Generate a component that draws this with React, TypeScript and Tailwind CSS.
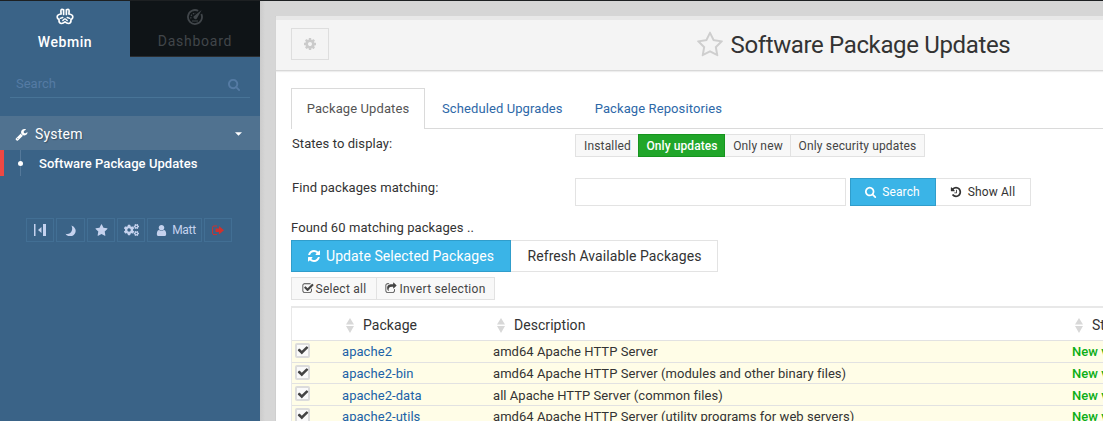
import React from 'react';
import { FaCogs } from 'react-icons/fa';

const paths = {
  search: 'M1152 832q0-185-131.5-316.5t-316.5-131.5-316.5 131.5-131.5 316.5 131.5 316.5 316.5 131.5 316.5-131.5 131.5-316.5zm512 832q0 52-38 90t-90 38q-54 0-90-38l-343-342q-179 124-399 124-143 0-273.5-55.5t-225-150-150-225-55.5-273.5 55.5-273.5 150-225 225-150 273.5-55.5 273.5 55.5 225 150 150 225 55.5 273.5q0 220-124 399l343 343q37 37 37 90z',
  refresh: 'M1639 1056q0 5-1 7-64 268-268 434.5t-478 166.5q-146 0-282.5-55t-243.5-157l-129 129q-19 19-45 19t-45-19-19-45v-448q0-26 19-45t45-19h448q26 0 45 19t19 45-19 45l-137 137q71 66 161 102t187 36q134 0 250-65t186-179q11-17 53-117 8-23 30-23h192q13 0 22.5 9.5t9.5 22.5zm25-800v448q0 26-19 45t-45 19h-448q-26 0-45-19t-19-45 19-45l138-138q-148-137-349-137-134 0-250 65t-186 179q-11 17-53 117-8 23-30 23h-199q-13 0-22.5-9.5t-9.5-22.5v-7q65-268 270-434.5t480-166.5q146 0 284 55.5t245 156.5l130-129q19-19 45-19t45 19 19 45z',
  history: 'M1664 896q0 156-61 298t-164 245-245 164-298 61q-172 0-327-72.5t-264-204.5q-7-10-6.5-22.5t8.5-20.5l137-138q10-9 25-9 16 2 23 12 73 95 179 147t225 52q104 0 198.5-40.5t163.5-109.5 109.5-163.5 40.5-198.5-40.5-198.5-109.5-163.5-163.5-109.5-198.5-40.5q-98 0-188 35.5t-160 101.5l137 138q31 30 14 69-17 40-59 40h-448q-26 0-45-19t-19-45v-448q0-42 40-59 39-17 69 14l130 129q107-101 244.5-156.5t284.5-55.5q156 0 298 61t245 164 164 245 61 298zm-640-288v448q0 14-9 23t-23 9h-320q-14 0-23-9t-9-23v-64q0-14 9-23t23-9h224v-352q0-14 9-23t23-9h64q14 0 23 9t9 23z',
  star: 'M1728 647q0 22-26 48l-363 354 86 500q1 7 1 20 0 21-10.5 35.5t-30.5 14.5q-19 0-40-12l-449-236-449 236q-22 12-40 12-21 0-31.5-14.5t-10.5-35.5q0-6 2-20l86-500-364-354q-25-27-25-48 0-37 56-46l502-73 225-455q19-41 49-41t49 41l225 455 502 73q56 9 56 46z',
  starOutline: 'M1201 1004l306-297-422-62-189-382-189 382-422 62 306 297-73 421 378-199 377 199zm527-357q0 22-26 48l-363 354 86 500q1 7 1 20 0 50-41 50-19 0-40-12l-449-236-449 236q-22 12-40 12-21 0-31.5-14.5t-10.5-35.5q0-6 2-20l86-500-364-354q-25-27-25-48 0-37 56-46l502-73 225-455q19-41 49-41t49 41l225 455 502 73q56 9 56 46z',
  cog: 'M1152 896q0-106-75-181t-181-75-181 75-75 181 75 181 181 75 181-75 75-181zm512-109v222q0 12-8 23t-20 13l-185 28q-19 54-39 91 35 50 107 138 10 12 10 25t-9 23q-27 37-99 108t-94 71q-12 0-26-9l-138-108q-44 23-91 38-16 136-29 186-7 28-36 28h-222q-14 0-24.5-8.5t-11.5-21.5l-28-184q-49-16-90-37l-141 107q-10 9-25 9-14 0-25-11-126-114-165-168-7-10-7-23 0-12 8-23 15-21 51-66.5t54-70.5q-27-50-41-99l-183-27q-13-2-21-12.5t-8-23.5v-222q0-12 8-23t19-13l186-28q14-46 39-92-40-57-107-138-10-12-10-24 0-10 9-23 26-36 98.5-107.5t94.5-71.5q13 0 26 10l138 107q44-23 91-38 16-136 29-186 7-28 36-28h222q14 0 24.5 8.5t11.5 21.5l28 184q49 16 90 37l142-107q9-9 24-9 13 0 25 10 129 119 165 170 7 8 7 22 0 12-8 23-15 21-51 66.5t-54 70.5q26 50 41 98l183 28q13 2 21 12.5t8 23.5z',
  user: 'M1536 1399q0 109-62.5 187t-150.5 78h-854q-88 0-150.5-78t-62.5-187q0-85 8.5-160.5t31.5-152 58.5-131 94-89 134.5-34.5q131 128 313 128t313-128q76 0 134.5 34.5t94 89 58.5 131 31.5 152 8.5 160.5zm-256-887q0 159-112.5 271.5t-271.5 112.5-271.5-112.5-112.5-271.5 112.5-271.5 271.5-112.5 271.5 112.5 112.5 271.5z',
  wrench: 'M448 1472q0-26-19-45t-45-19-45 19-19 45 19 45 45 19 45-19 19-45zm644-420l-682 682q-37 37-90 37-52 0-91-37l-106-108q-38-36-38-90 0-53 38-91l681-681q39 98 114.5 173.5t173.5 114.5zm634-435q0 39-23 106-47 134-164.5 217.5t-258.5 83.5q-185 0-316.5-131.5t-131.5-316.5 131.5-316.5 316.5-131.5q58 0 121.5 16.5t107.5 46.5q16 11 16 28t-16 28l-293 169v224l193 107q5-3 79-48.5t135.5-81 70.5-35.5q15 0 23.5 10t8.5 25z',
  checkSquare: 'M1472 930v318q0 119-84.5 203.5t-203.5 84.5h-832q-119 0-203.5-84.5t-84.5-203.5v-832q0-119 84.5-203.5t203.5-84.5h832q63 0 117 25 15 7 18 23 3 17-9 29l-49 49q-10 10-23 10-3 0-9-2-23-6-45-6h-832q-66 0-113 47t-47 113v832q0 66 47 113t113 47h832q66 0 113-47t47-113v-254q0-13 9-22l64-64q10-10 23-10 6 0 12 3 20 8 20 29zm231-489l-814 814q-24 24-57 24t-57-24l-430-430q-24-24-24-57t24-57l110-110q24-24 57-24t57 24l263 263 647-647q24-24 57-24t57 24l110 110q24 24 24 57t-24 57z',
  shareSquare: 'M1472 989v259q0 119-84.5 203.5t-203.5 84.5h-832q-119 0-203.5-84.5t-84.5-203.5v-832q0-119 84.5-203.5t203.5-84.5h255q13 0 22.5 9.5t9.5 22.5q0 27-26 32-77 26-133 60-10 4-16 4h-112q-66 0-113 47t-47 113v832q0 66 47 113t113 47h832q66 0 113-47t47-113v-214q0-19 18-29 28-13 54-37 16-16 35-8 21 9 21 29zm237-496l-384 384q-18 19-45 19-12 0-25-5-39-17-39-59v-192h-160q-323 0-438 131-119 137-74 473 3 23-20 34-8 2-12 2-16 0-26-13-10-14-21-31t-39.5-68.5-49.5-99.5-38.5-114-17.5-122q0-49 3.5-91t14-90 28-88 47-81.5 68.5-74 94.5-61.5 124.5-48.5 159.5-30.5 196.5-11h160v-192q0-42 39-59 13-5 25-5 26 0 45 19l384 384q19 19 19 45t-19 45z',
  check: 'M1671 566q0 40-28 68l-724 724-136 136q-28 28-68 28t-68-28l-136-136-362-362q-28-28-28-68t28-68l136-136q28-28 68-28t68 28l294 295 656-657q28-28 68-28t68 28l136 136q28 28 28 68z',
};

function Icon({ name, className }: { name: keyof typeof paths; className: string }) {
  return (
    <svg viewBox="0 0 1792 1792" fill="currentColor" className={`shrink-0 ${className}`}>
      <path d={paths[name]} />
    </svg>
  );
}

function WebminLogo() {
  return (
    <svg viewBox="0 0 18 17" className="h-[17px] w-[18px]" fill="none" stroke="currentColor" strokeLinecap="round" strokeLinejoin="round">
      <path d="M7.600 6.500V1.800Q4.700 0.500 4.900 3.200L5.100 6Q1.200 6.300 1.200 9Q1.200 10.600 3 11.500Q2.800 15.500 5.600 15.500Q7.200 15.300 9 13.800Q10.800 15.300 12.400 15.500Q15.200 15.500 15 11.500Q16.800 10.600 16.800 9Q16.800 6.300 12.900 6L13.100 3.200Q13.300 0.500 10.400 1.800V6.500" strokeWidth="1.700" />
      <path d="M4.200 10.300L6.800 9.500M13.800 10.300L11.200 9.500M6.800 12.500L8.500 11M11.200 12.500L9.500 11" strokeWidth="1.400" />
    </svg>
  );
}

function GaugeIcon() {
  return (
    <svg viewBox="0 0 16 16" className="h-4 w-4" fill="none" stroke="currentColor">
      <path d="M11.200 1.800A7 7 0 1 0 14.300 5" strokeWidth="1.800" />
      <path d="M4 9.500A4.200 4.200 0 0 1 8.500 4.300" strokeWidth="1.200" strokeDasharray="1.500 1" />
      <path d="M14.600 1L9.700 9.700A2 2 0 0 1 6.500 7.600Z" fill="currentColor" stroke="none" />
      <path d="M5 12H11" strokeWidth="1" />
    </svg>
  );
}

function SortIcon() {
  return (
    <svg viewBox="0 0 8 15" className="h-[15px] w-2 shrink-0 text-[#d8d8d8]" fill="currentColor">
      <path d="M4 0L8 6.500H0ZM4 15L0 8H8Z" />
    </svg>
  );
}

const tool = 'flex h-6 items-center justify-center border border-[#426f94]';
const small = 'flex h-[23px] items-center justify-center border border-[#e2e2e2] bg-[#f8f8f8] text-[12px] tracking-[0.15px] text-[#444]';

function Sidebar() {
  return (
    <aside className="h-[420px] w-[260px] shrink-0 bg-[#3a6387] text-white">
      <div className="flex h-14">
        <div className="flex w-[130px] flex-col items-center pt-[7px]">
          <WebminLogo />
          <span className="mt-[7px] text-[14px] leading-5 font-medium tracking-[0.55px]">Webmin</span>
        </div>
        <div className="flex w-[130px] flex-col items-center border-b border-[#2a2d30] bg-[#0f1417] pt-2 text-[#41464a]">
          <GaugeIcon />
          <span className="mt-1.5 text-[14px] leading-5 tracking-[0.75px]">Dashboard</span>
        </div>
      </div>
      <div className="mx-2.5 flex h-[41px] items-center justify-between border-b border-[#487497] pt-[14px] pr-[9px] pl-1.5 text-[13px] text-[#557ba4]">
        <span>Search</span>
        <Icon name="search" className="h-[13px] w-[13px]" />
      </div>
      <div className="mt-[18px] flex h-[34px] items-center bg-[#507290] pt-0.5 pr-[18px] pl-[15px] text-[14px]">
        <Icon name="wrench" className="h-[13px] w-[13px]" />
        <span className="ml-[7px] tracking-[0.2px] [text-shadow:1px_1px_1px_rgba(0,0,0,0.3)]">System</span>
        <svg viewBox="0 0 8 4" className="ml-auto h-1 w-[7px]" fill="currentColor"><path d="M0 0H8L4 4Z" /></svg>
      </div>
      <div className="flex h-[26px] items-center border-l-4 border-[#ed4843]">
        <div className="ml-4 flex h-full w-px items-center justify-center bg-[#55799a]">
          <span className="h-[5px] w-[5px] shrink-0 rounded-full bg-white" />
        </div>
        <span className="ml-[18px] pt-0.5 text-[13px] font-medium tracking-[0.06px]">Software Package Updates</span>
      </div>
      <div className="mt-[42px] ml-[26px] flex gap-0.5 text-[12px] text-[#c5d2ee]">
        <div className={`${tool} w-7`}>
          <svg viewBox="0 0 12 12" className="h-3 w-3" fill="currentColor"><path d="M0 0H1.500V12H0ZM4 6L7.500 3V9ZM9 0H12V12H9Z" /></svg>
        </div>
        <div className={`${tool} w-[29px]`}>
          <svg viewBox="0 0 12 12" className="h-[11px] w-[11px]" fill="currentColor"><path d="M7 0.500A6 6 0 1 1 0.500 9.500Q5.500 10.500 7.300 6.500Q8.500 3.300 7 0.500Z" /></svg>
        </div>
        <div className={`${tool} w-7`}><Icon name="star" className="h-[13px] w-[13px]" /></div>
        <div className={`${tool} w-7`}><FaCogs className="h-[14px] w-[15px]" /></div>
        <div className={`${tool} w-[55px] gap-1 pl-0.5`}><Icon name="user" className="h-[13px] w-[13px]" /><span className="tracking-[-0.3px]">Matt</span></div>
        <div className={`${tool} w-7 text-[#d0312d]`}>
          <svg viewBox="0 0 12 11" className="h-[11px] w-3 shrink-0" fill="currentColor"><path d="M5 1H2Q0.600 1 0.600 2.400V8.200Q0.600 9.600 2 9.600H5" fill="none" stroke="currentColor" /><path d="M3.500 3.500H7V1L12 5.300L7 9.600V7.100H3.500Z" /></svg>
        </div>
      </div>
    </aside>
  );
}

const rows = [
  ['apache2', 'amd64 Apache HTTP Server'],
  ['apache2-bin', 'amd64 Apache HTTP Server (modules and other binary files)'],
  ['apache2-data', 'all Apache HTTP Server (common files)'],
  ['apache2-utils', 'amd64 Apache HTTP Server (utility programs for web servers)'],
];

function PackageTable() {
  return (
    <div className="mt-1.5 w-[900px] border-t-2 border-l border-[#e8e8e8] text-[13px] tracking-[0.055px]">
      <div className="flex h-8 items-center pt-0.5 text-[14px] tracking-[0.05px]">
        <div className="flex w-[151px] items-center gap-[9px] pl-[54px]"><SortIcon />Package</div>
        <div className="flex w-[578px] items-center gap-[9px] pl-[54px]"><SortIcon />Description</div>
        <div className="flex items-center gap-[9px] pl-[54px]"><SortIcon />State</div>
      </div>
      {rows.map(([name, description]) => (
        <div key={name} className="flex h-[21.700px] items-center border-t border-[#e2e2e2] bg-[#fffde7]">
          <div className="mb-[2px] ml-[3px] flex h-[15px] w-[15px] items-center justify-center rounded-[2px] border-2 border-[#dcdcdc] bg-[#fafafa]">
            <Icon name="check" className="h-3 w-3 text-[#444]" />
          </div>
          <span className="ml-8 w-[151px] pt-[1.500px] whitespace-nowrap text-[#2062a7]">{name}</span>
          <span className="w-[579px] pt-[1.500px] whitespace-nowrap">{description}</span>
          <span className="pt-[1.500px] font-medium whitespace-nowrap text-[#0cae17]">New version</span>
        </div>
      ))}
    </div>
  );
}

export default function App() {
  return (
    <div className="h-[421px] w-[1103px] overflow-hidden border-t border-[#1d2022] bg-[#d6d6d6] font-['Roboto',sans-serif] text-[#333]">
      <div className="flex">
        <Sidebar />
        <div className="h-[420px] w-[843px] overflow-hidden bg-linear-to-r from-[#cbcbcb] to-[#d6d6d6] to-[5px] pt-[15px] pl-[15px]">
          <main className="h-[410px] border-l border-[#cfcfcf] bg-white">
            <header className="flex h-[55px] items-center border-t-4 border-b border-t-[#e8e8e8] border-b-[#d8d8d8] bg-[#f4f4f4] pl-[15px] shadow-[0_1px_1px_#eee]">
              <div className="mb-0.5 flex h-8 w-[38px] items-center justify-center border border-[#dedede]"><Icon name="cog" className="h-[14px] w-[14px] text-[#cbcbcb]" /></div>
              <div className="ml-[367px] flex items-center gap-[6.500px] text-[24px] tracking-[-0.36px]">
                <Icon name="starOutline" className="h-[28px] w-[28px] text-[#cecece]" />
                <h1 className="whitespace-nowrap">Software Package Updates</h1>
              </div>
            </header>
            <nav className="mt-[17px] ml-[15px] flex h-[41px] text-[13px] tracking-[0.1px] text-[#2d68a8]">
              <div className="flex w-[134px] items-center justify-center border border-b-0 border-[#dadada] text-[#555]">Package Updates</div>
              <div className="flex flex-1 items-center gap-8 border-b border-[#dadada] pt-px pl-[17px]"><span>Scheduled Upgrades</span><span>Package Repositories</span></div>
            </nav>
            <section className="pl-[15px]">
              <div className="flex h-7 pt-[5px]">
                <span className="w-[284px] pl-px text-[13px] leading-5 tracking-[0.08px]">States to display:</span>
                <div className="flex">
                  <div className={`${small} w-[63px] border-r-0 pl-px`}>Installed</div>
                  <div className="flex h-[23px] w-[87px] items-center justify-center border border-[#16941e] bg-[#21a62a] pl-px text-[12px] font-medium tracking-[0.08px] text-white">Only updates</div>
                  <div className={`${small} w-[65px] border-r-0 border-l-0 pl-px`}>Only new</div>
                  <div className={`${small} w-[135px]`}>Only security updates</div>
                </div>
              </div>
              <div className="mt-[21px] flex h-7 text-[12px]">
                <span className="w-[284px] pl-px text-[13px] leading-5 tracking-[0.08px]">Find packages matching:</span>
                <div className="h-7 w-[271px] border border-[#e3e3e3]" />
                <div className="ml-1 flex w-[86px] items-center justify-center gap-[5px] border border-[#309dcb] bg-[#3ab4e7] pr-px pb-px text-[12px] tracking-[0.1px] text-white"><Icon name="search" className="h-3 w-3" />Search</div>
                <div className="flex w-[95px] items-center justify-center gap-1.5 border border-l-0 border-[#e3e3e3] pr-px tracking-[0.15px]"><Icon name="history" className="h-3 w-3" />Show All</div>
              </div>
              <div className="mt-3 h-[22px] text-[13px] leading-5 tracking-[0.08px]">Found 60 matching packages ..</div>
              <div className="flex h-8 text-[14px] tracking-[0.08px]">
                <div className="flex w-[220px] items-center justify-center gap-[5px] border border-[#309dcb] bg-[#3ab4e7] pr-px text-white"><Icon name="refresh" className="h-[14px] w-[14px]" />Update Selected Packages</div>
                <div className="flex w-[207px] items-center justify-center border border-l-0 border-[#e3e3e3] pl-px">Refresh Available Packages</div>
              </div>
              <div className="mt-[5px] flex">
                <div className={`${small} w-[86px] gap-0.5`}><Icon name="checkSquare" className="h-[13px] w-3" /><span className="tracking-[0.25px]">Select all</span></div>
                <div className={`${small} w-[118px] gap-0.5 border-l-0`}><Icon name="shareSquare" className="h-[13px] w-3" /><span className="tracking-[0.28px]">Invert selection</span></div>
              </div>
              <PackageTable />
            </section>
          </main>
        </div>
      </div>
    </div>
  );
}
